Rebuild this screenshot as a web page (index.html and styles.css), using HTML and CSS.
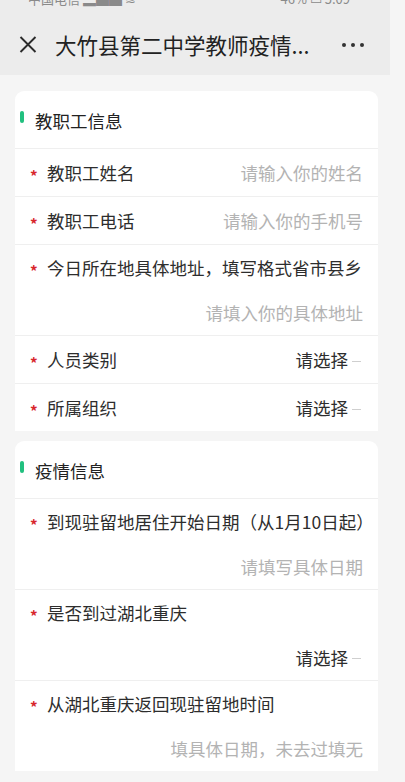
FILE: index.html
```html
<!DOCTYPE html>
<html lang="zh-CN">
<head>
<meta charset="utf-8">
<title>大竹县第二中学教师疫情</title>
<link rel="stylesheet" href="styles.css">
</head>
<body>
<div class="top">
  <div class="status">
    <div class="status-inner">
      <span class="carrier">中国电信 ▂▄▆ ≋</span>
      <span class="sys">46% ▭ 5:09</span>
    </div>
  </div>
  <div class="nav">
    <svg class="close" width="18" height="17" viewBox="0 0 18 17"><path d="M1.5 1 L16.5 16 M16.5 1 L1.5 16" stroke="#2b2b2b" stroke-width="1.9" fill="none"/></svg>
    <div class="title">大竹县第二中学教师疫情...</div>
    <svg class="more" width="24" height="6" viewBox="0 0 24 6"><circle cx="3" cy="3" r="2" fill="#333"/><circle cx="12" cy="3" r="2" fill="#333"/><circle cx="21" cy="3" r="2" fill="#333"/></svg>
  </div>
</div>

<div class="card">
  <div class="sec"><span class="bar"></span><span class="sec-title">教职工信息</span></div>
  <div class="row">
    <span class="req">*</span><span class="label">教职工姓名</span>
    <span class="ph">请输入你的姓名</span>
  </div>
  <div class="row">
    <span class="req">*</span><span class="label">教职工电话</span>
    <span class="ph">请输入你的手机号</span>
  </div>
  <div class="row tall">
    <div class="line"><span class="req">*</span><span class="label">今日所在地具体地址，填写格式省市县乡</span></div>
    <div class="val"><span class="ph">请填入你的具体地址</span></div>
  </div>
  <div class="row">
    <span class="req">*</span><span class="label">人员类别</span>
    <span class="sel">请选择<span class="dash"></span></span>
  </div>
  <div class="row">
    <span class="req">*</span><span class="label">所属组织</span>
    <span class="sel">请选择<span class="dash"></span></span>
  </div>
</div>

<div class="card">
  <div class="sec"><span class="bar"></span><span class="sec-title">疫情信息</span></div>
  <div class="row tall">
    <div class="line"><span class="req">*</span><span class="label">到现驻留地居住开始日期（从1月10日起）</span></div>
    <div class="val"><span class="ph">请填写具体日期</span></div>
  </div>
  <div class="row tall">
    <div class="line"><span class="req">*</span><span class="label">是否到过湖北重庆</span></div>
    <div class="val"><span class="sel">请选择<span class="dash"></span></span></div>
  </div>
  <div class="row tall">
    <div class="line"><span class="req">*</span><span class="label">从湖北重庆返回现驻留地时间</span></div>
    <div class="val"><span class="ph">填具体日期，未去过填无</span></div>
  </div>
</div>
</body>
</html>
```

FILE: styles.css
```css
* { box-sizing: border-box; }
html, body { margin: 0; padding: 0; }
body {
  background: #f5f5f5;
  font-family: "Noto Sans CJK SC", "Noto Sans", sans-serif;
  color: #333;
  width: 405px;
  overflow: hidden;
}
.top {
  width: 390px;
  height: 75px;
  background: #ececec;
}
.status {
  height: 14px;
  overflow: hidden;
}
.status-inner {
  display: flex;
  justify-content: space-between;
  padding: 0 40px 0 28px;
  font-size: 13px;
  line-height: 16px;
  margin-top: -9px;
  color: #8a8a8a;
}
.nav {
  height: 61px;
  display: flex;
  align-items: center;
  padding: 0 25px 0 19px;
}
.close { flex: none; }
.title {
  flex: 1;
  margin-left: 18px;
  font-size: 21.5px;
  color: #222;
  white-space: nowrap;
}
.more { flex: none; }

.card {
  width: 363px;
  margin: 16px 0 0 15px;
  background: #fff;
  border-radius: 9px 9px 0 0;
}
.card + .card { margin-top: 10px; }
.sec {
  height: 57px;
  display: flex;
  align-items: center;
  padding-left: 5px;
}
.bar {
  width: 4px;
  height: 12px;
  border-radius: 2px;
  background: #21c07f;
  margin-top: -5px;
}
.sec-title {
  margin-left: 11px;
  font-size: 17.5px;
  color: #222;
  margin-top: 2px;
}
.row {
  height: 48px;
  border-top: 1.5px solid #efefef;
  display: flex;
  align-items: center;
  padding: 0 15px;
}
.row.tall {
  height: 91px;
  display: block;
}
.line {
  height: 45px;
  display: flex;
  align-items: center;
}
.val {
  height: 44px;
  display: flex;
  align-items: center;
  justify-content: flex-end;
}
.req {
  color: #d8262c;
  font-size: 15px;
  font-weight: 700;
  width: 17px;
  flex: none;
  padding-top: 5px;
}
.label {
  font-size: 17.5px;
  color: #2d2d2d;
  white-space: nowrap;
}
.ph {
  margin-left: auto;
  font-size: 17.5px;
  color: #b3b3b3;
  white-space: nowrap;
}
.sel {
  margin-left: auto;
  font-size: 17.5px;
  color: #2d2d2d;
  display: flex;
  align-items: center;
}
.dash {
  display: inline-block;
  width: 9px;
  height: 1px;
  background: #cfcfcf;
  margin-left: 4px;
  margin-right: 2px;
  margin-top: 3px;
}
```
